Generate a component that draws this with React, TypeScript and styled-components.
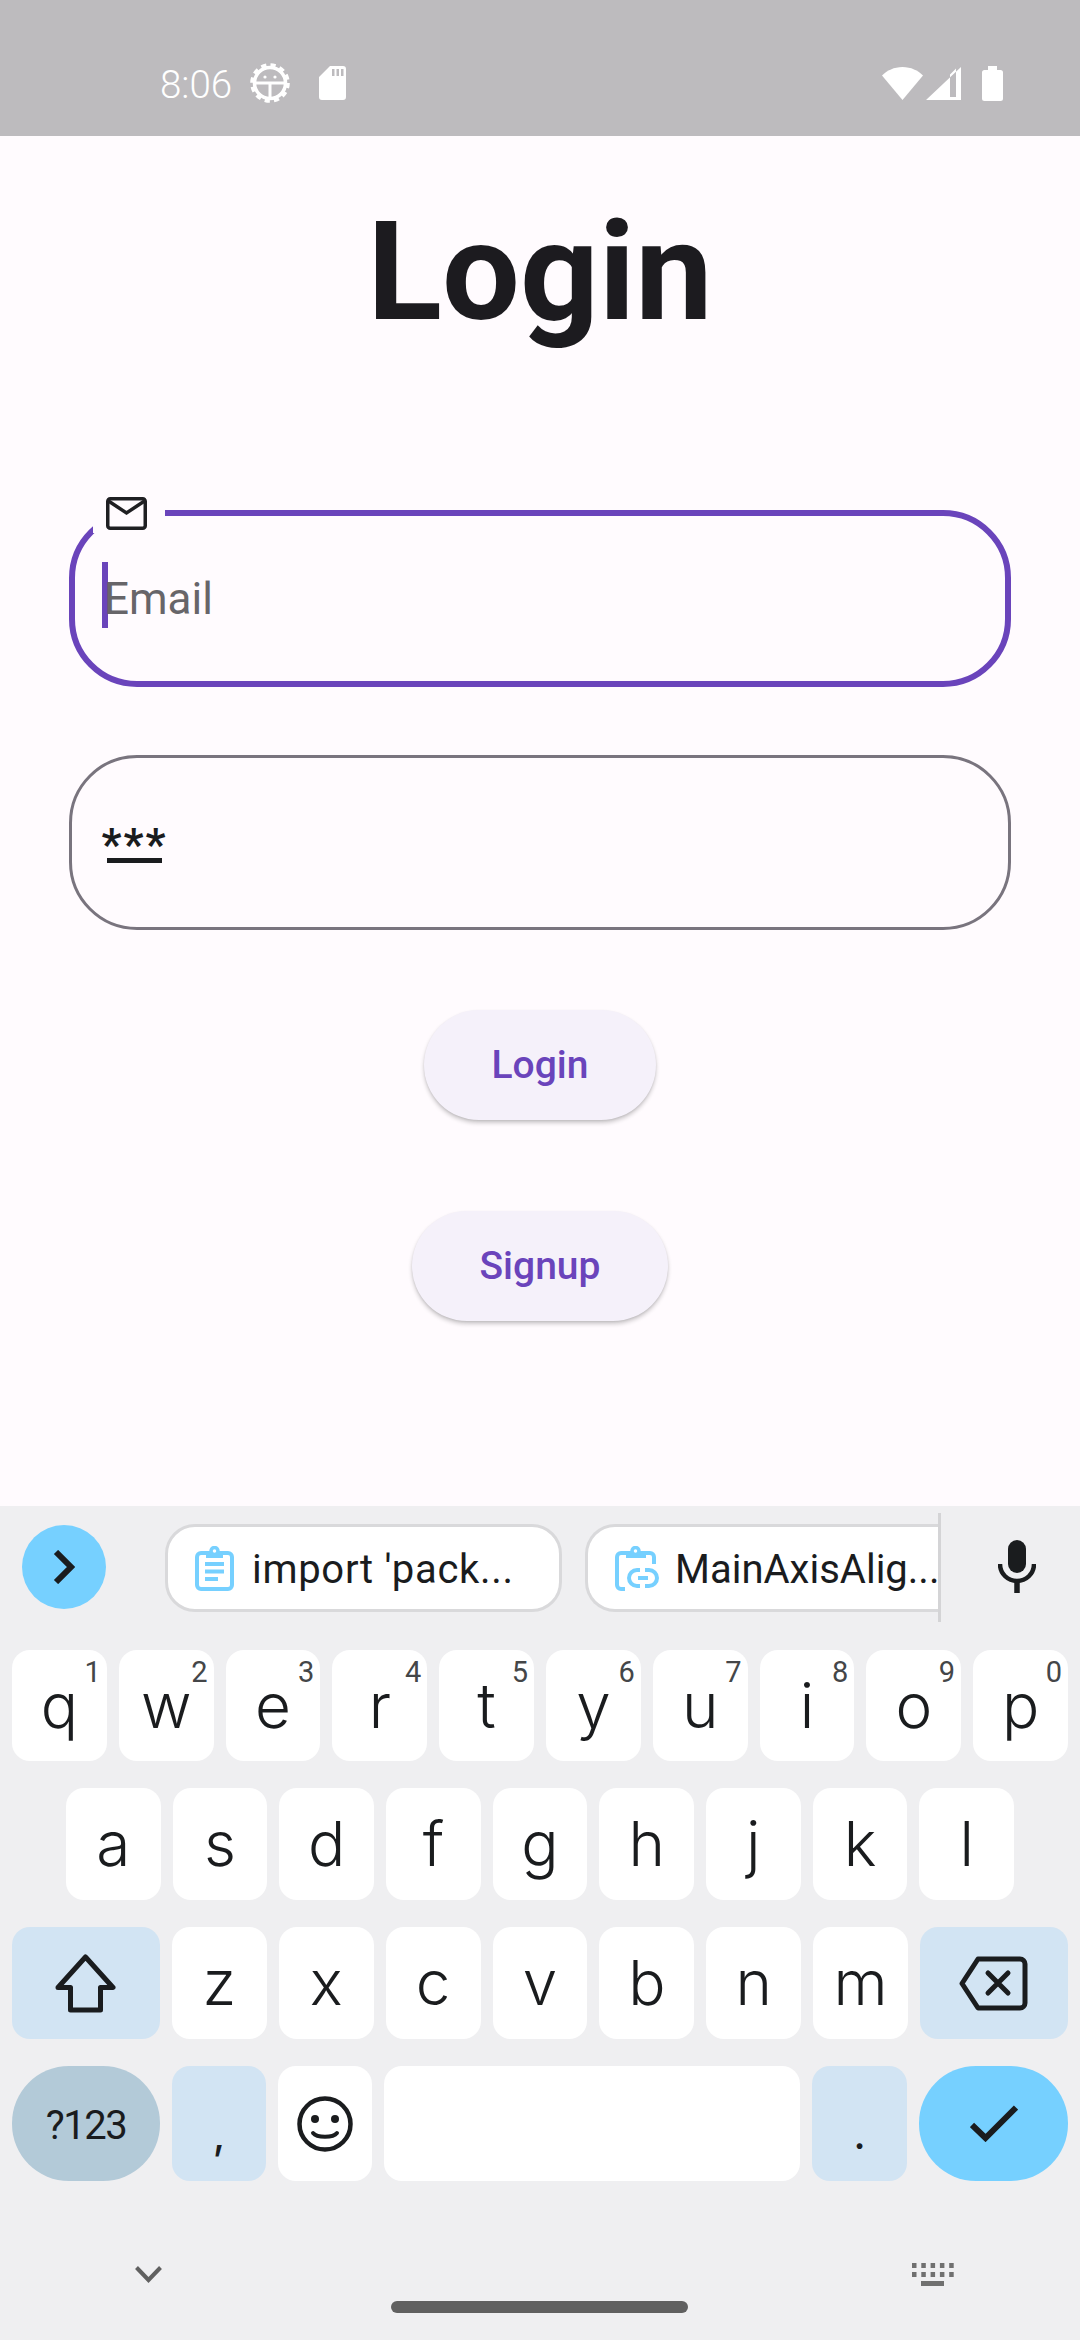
import React from "react";
import styled, { createGlobalStyle } from "styled-components";

const Global = createGlobalStyle`
  html, body { margin: 0; padding: 0; background: #fffbfe; }
  * { box-sizing: border-box; }
  #root { width: 1080px; height: 2340px; }
`;

const ROBOTO = `Roboto, "Liberation Sans", sans-serif`;
const INK = "#1a1c1e";
const PURPLE = "#6a44bb";
const SKY = "#76d0ff";
const MOD = "#d2e4f3";

const Screen = styled.div`
  width: 1080px;
  height: 2340px;
  display: flex;
  flex-direction: column;
  overflow: hidden;
  background: #fffbfe;
  font-family: ${ROBOTO};
`;

/* ---------- status bar ---------- */
const StatusBar = styled.header`
  height: 136px;
  flex: none;
  background: #bdbbbe;
  display: flex;
  align-items: center;
  justify-content: space-between;
  padding: 30px 77px 0 160px;
  color: #fff;
`;
const StatusGroup = styled.div<{ $gap: number; $lead?: number }>`
  display: flex;
  align-items: center;
  gap: ${(p) => p.$gap}px;
  margin-left: ${(p) => p.$lead ?? 0}px;
`;
const Clock = styled.span`
  font-size: 38.5px;
  font-weight: 300;
  line-height: 40px;
  width: 72px;
  margin-right: 18px;
  padding-top: 3px;
  white-space: nowrap;
`;
const StatusIcon = styled.svg`
  display: block;
  flex: none;
`;

/* ---------- form ---------- */
const Main = styled.main`
  flex: 1;
  display: flex;
  flex-direction: column;
  align-items: center;
`;
const Title = styled.h1`
  margin: 0;
  padding-top: 56px;
  height: 374px;
  font-size: 138px;
  line-height: 160px;
  font-weight: 700;
  color: #1c1b1f;
`;
const Field = styled.div<{ $focused?: boolean }>`
  position: relative;
  width: 942px;
  height: ${(p) => (p.$focused ? 177 : 175)}px;
  margin-bottom: ${(p) => (p.$focused ? 68 : 80)}px;
  border: ${(p) => (p.$focused ? `6px solid ${PURPLE}` : "3px solid #79747e")};
  border-radius: 68px;
  display: flex;
  align-items: center;
  padding-left: ${(p) => (p.$focused ? 27 : 35)}px;
`;
const Notch = styled.div`
  position: absolute;
  left: 18px;
  top: -19px;
  width: 72px;
  height: 36px;
  padding-left: 13px;
  background: #fffbfe;
`;
const Caret = styled.span`
  width: 6px;
  height: 66px;
  margin: 0 -4px 8px 0;
  background: ${PURPLE};
  flex: none;
`;
const Placeholder = styled.span`
  font-size: 44px;
  line-height: 50px;
  color: #676569;
`;
const Secret = styled.div`
  display: flex;
  flex-direction: column;
  align-items: center;
  width: 55px;
`;
const Stars = styled.span`
  font-size: 44px;
  letter-spacing: 2px;
  line-height: 40px;
  height: 34px;
  padding-top: 3px;
  font-weight: 700;
  color: ${INK};
  white-space: nowrap;
`;
const Underline = styled.span`
  width: 55px;
  height: 5px;
  margin-top: 2px;
  background: ${INK};
`;
const PillButton = styled.button<{ $width: number }>`
  width: ${(p) => p.$width}px;
  height: 110px;
  margin-bottom: 91px;
  border: 0;
  padding: 0;
  border-radius: 55px;
  background: #f5f1fa;
  color: ${PURPLE};
  font-family: ${ROBOTO};
  font-size: 39px;
  font-weight: 500;
  box-shadow: 0 3px 4px rgba(0, 0, 0, 0.2), 0 1px 2px rgba(0, 0, 0, 0.08);
`;

/* ---------- keyboard ---------- */
const Keyboard = styled.section`
  height: 834px;
  flex: none;
  background: #efeff1;
  display: flex;
  flex-direction: column;
`;
const Toolbar = styled.div`
  height: 144px;
  flex: none;
  padding: 7px 0 0 22px;
  display: flex;
  align-items: flex-start;
`;
const RoundToggle = styled.div`
  width: 84px;
  height: 84px;
  margin: 12px 59px 0 0;
  border-radius: 50%;
  background: ${SKY};
  display: flex;
  align-items: center;
  justify-content: center;
  flex: none;
`;
const Chip = styled.div<{ $width: number; $open?: boolean; $top?: number; $gap: number }>`
  width: ${(p) => p.$width}px;
  height: 88px;
  margin-top: ${(p) => p.$top ?? 0}px;
  flex: none;
  background: #fff;
  border: 3px solid #d9d9db;
  border-right-width: ${(p) => (p.$open ? 0 : 3)}px;
  border-radius: ${(p) => (p.$open ? "30px 0 0 30px" : "30px")};
  display: flex;
  align-items: center;
  padding-left: 27px;
  gap: ${(p) => p.$gap}px;
  color: ${INK};
  white-space: nowrap;
`;
const ChipLabel = styled.span<{ $track?: number }>`
  font-size: 40px;
  line-height: 48px;
  padding-top: 4px;
  letter-spacing: ${(p) => p.$track ?? 0}px;
`;
const ChipRail = styled.div`
  width: 356px;
  height: 109px;
  margin-left: 23px;
  padding-top: 11px;
  border-right: 3px solid #d4d4d6;
  flex: none;
`;
const MicSlot = styled.div`
  margin: 27px 0 0 57px;
`;
const KeyRows = styled.div`
  display: flex;
  flex-direction: column;
  gap: 27px;
`;
const KeyRow = styled.div<{ $inset?: number; $height: number }>`
  display: flex;
  gap: 12px;
  height: ${(p) => p.$height}px;
  padding: 0 ${(p) => p.$inset ?? 12}px;
`;
const Key = styled.div<{ $grow?: number; $tone?: "mod" | "sym" | "go"; $round?: boolean }>`
  position: relative;
  flex: ${(p) => p.$grow ?? 1} 1 0;
  min-width: 0;
  border-radius: ${(p) => (p.$round ? "57px" : "18px")};
  background: ${(p) =>
    p.$tone === "mod" ? MOD : p.$tone === "sym" ? "#b3cad8" : p.$tone === "go" ? SKY : "#fff"};
  display: flex;
  align-items: center;
  justify-content: center;
  color: ${INK};
  font-family: Inter, ${ROBOTO};
  font-size: 62px;
  font-weight: 300;
  line-height: 1;
`;
const Hint = styled.sup`
  position: absolute;
  top: 8px;
  right: 6px;
  font-family: ${ROBOTO};
  font-size: 29px;
  line-height: 1;
  font-weight: 400;
  color: #444648;
  vertical-align: baseline;
`;
const SymLabel = styled.span`
  font-family: ${ROBOTO};
  font-size: 40px;
  letter-spacing: -1.5px;
  font-weight: 400;
  padding-top: 4px;
`;
const Punct = styled.span`
  font-size: 40px;
  font-weight: 500;
  line-height: 1;
  padding-top: 22px;
`;
const NavBar = styled.div`
  position: relative;
  flex: 1;
  padding: 0 126px 0 135px;
  display: flex;
  justify-content: space-between;
  align-items: flex-start;
`;
const NavIcon = styled.svg<{ $top: number }>`
  display: block;
  margin-top: ${(p) => p.$top}px;
`;
const HomeBar = styled.div`
  position: absolute;
  left: 391px;
  top: 120px;
  width: 297px;
  height: 12px;
  border-radius: 6px;
  background: #606060;
`;

/* ---------- drawings ---------- */
const GearIcon = () => (
  <StatusIcon width="40" height="40" viewBox="0 0 40 40" fill="none" stroke="#fff">
    <circle cx="20" cy="20" r="15.5" strokeWidth="3.5" />
    <circle cx="20" cy="20" r="18" strokeWidth="3.6" strokeDasharray="5.2 4.22" />
    <path d="M5 20H35M20 20V35" strokeWidth="3" />
    <circle cx="15" cy="14" r="1.6" fill="#fff" stroke="none" />
    <circle cx="25" cy="14" r="1.6" fill="#fff" stroke="none" />
  </StatusIcon>
);
const SdIcon = () => (
  <StatusIcon width="27" height="34" viewBox="0 0 27 34">
    <path
      fill="#fff"
      fillRule="evenodd"
      d="M11 0H24a3 3 0 0 1 3 3V31a3 3 0 0 1-3 3H3a3 3 0 0 1-3-3V11ZM13 3V10H15.500V3ZM17.500 3V10H20V3ZM22 3V10H24.500V3Z"
    />
  </StatusIcon>
);
const WifiIcon = () => (
  <StatusIcon width="41" height="33" viewBox="0 0 41 33">
    <path fill="#fff" d="M20.500 33 0 8.500C5 3.500 12 0 20.500 0S36 3.500 41 8.500Z" />
  </StatusIcon>
);
const SignalIcon = () => (
  <StatusIcon width="35" height="33" viewBox="0 0 35 33">
    <path fill="#fff" fillRule="evenodd" d="M35 0V33H0ZM24 7.500 24 30H30V1.500Z" />
  </StatusIcon>
);
const BatteryIcon = () => (
  <StatusIcon width="21" height="35" viewBox="0 0 21 35">
    <path fill="#fff" d="M6 0H15V4H18.500A2.500 2.500 0 0 1 21 6.500V32.500A2.500 2.500 0 0 1 18.500 35H2.500A2.500 2.500 0 0 1 0 32.500V6.500A2.500 2.500 0 0 1 2.500 4H6Z" />
  </StatusIcon>
);
const MailIcon = () => (
  <StatusIcon width="41" height="33" viewBox="0 0 41 33" fill="none" stroke="#1f1f22" strokeWidth="3.500">
    <rect x="1.750" y="1.750" width="37.500" height="29.500" rx="2.500" />
    <path d="M2.500 4 20.500 16 38.500 4" />
  </StatusIcon>
);
const ClipIcon = () => (
  <StatusIcon width="39" height="45" viewBox="0 0 39 45" fill="none" stroke={SKY}>
    <rect x="2" y="7" width="35" height="36" rx="4" strokeWidth="4" />
    <path d="M11 9.500H28" strokeWidth="5" />
    <circle cx="19.500" cy="5" r="3.500" strokeWidth="3.500" fill="#fff" />
    <path d="M10 18H29M10 25.500H29M10 33H23" strokeWidth="4" />
  </StatusIcon>
);
const ClipLinkIcon = () => (
  <StatusIcon width="44" height="45" viewBox="0 0 44 45" fill="none" stroke={SKY}>
    <path d="M10 43H6A4 4 0 0 1 2 39V11A4 4 0 0 1 6 7H35A4 4 0 0 1 39 11V18" strokeWidth="4" />
    <path d="M11 9.500H31" strokeWidth="5" />
    <circle cx="20.500" cy="5" r="3.500" strokeWidth="3.500" fill="#fff" />
    <path d="M25 24H22A8 8 0 0 0 22 40H25M30 24H34A8 8 0 0 1 34 40H30M23 32H33" strokeWidth="4" />
  </StatusIcon>
);
const ChevronRight = () => (
  <StatusIcon width="22" height="34" viewBox="0 0 22 34" fill="none" stroke={INK} strokeWidth="6">
    <path d="M3 2 18 17 3 32" />
  </StatusIcon>
);
const MicIcon = () => (
  <StatusIcon width="38" height="53" viewBox="0 0 38 53">
    <rect x="10" y="0" width="18" height="33" rx="9" fill={INK} />
    <path d="M2 24C2 34 10 41 19 41S36 34 36 24" fill="none" stroke={INK} strokeWidth="4.500" />
    <path d="M19 40V53" fill="none" stroke={INK} strokeWidth="5.500" />
  </StatusIcon>
);
const ShiftIcon = () => (
  <StatusIcon width="61" height="59" viewBox="0 0 61 59" fill="none" stroke={INK} strokeWidth="5" strokeLinejoin="round">
    <path d="M30.500 3 58 33.500H45.500V56H15.500V33.500H3Z" />
  </StatusIcon>
);
const BackspaceIcon = () => (
  <StatusIcon width="69" height="55" viewBox="0 0 69 55" fill="none" stroke={INK} strokeWidth="5" strokeLinecap="round" strokeLinejoin="round">
    <path d="M19 3H61A5 5 0 0 1 66 8V47A5 5 0 0 1 61 52H19L3 27.500Z" />
    <path d="M29 17 49 37M49 17 29 37" />
  </StatusIcon>
);
const SmileIcon = () => (
  <StatusIcon width="56" height="56" viewBox="0 0 56 56" fill="none" stroke={INK}>
    <circle cx="28" cy="28" r="25.500" strokeWidth="4.500" />
    <circle cx="18" cy="23" r="4" fill={INK} stroke="none" />
    <circle cx="38" cy="23" r="4" fill={INK} stroke="none" />
    <path d="M16 37C20 42 36 42 40 37" strokeWidth="4" strokeLinecap="round" />
  </StatusIcon>
);
const CheckIcon = () => (
  <StatusIcon width="48" height="37" viewBox="0 0 48 37" fill="none" stroke={INK} strokeWidth="6">
    <path d="M2 20 15.500 33 46 2.500" />
  </StatusIcon>
);

const TOP_ROW: [string, string][] = [
  ["q", "1"], ["w", "2"], ["e", "3"], ["r", "4"], ["t", "5"],
  ["y", "6"], ["u", "7"], ["i", "8"], ["o", "9"], ["p", "0"],
];
const MID_ROW = ["a", "s", "d", "f", "g", "h", "j", "k", "l"];
const LOW_ROW = ["z", "x", "c", "v", "b", "n", "m"];

export default function App() {
  return (
    <Screen>
      <Global />
      <StatusBar>
        <StatusGroup $gap={0}>
          <Clock>8:06</Clock>
          <GearIcon />
          <StatusGroup $gap={0} $lead={29}>
            <SdIcon />
          </StatusGroup>
        </StatusGroup>
        <StatusGroup $gap={3}>
          <WifiIcon />
          <SignalIcon />
          <StatusGroup $gap={0} $lead={18}>
            <BatteryIcon />
          </StatusGroup>
        </StatusGroup>
      </StatusBar>

      <Main>
        <Title>Login</Title>
        <Field $focused>
          <Notch>
            <MailIcon />
          </Notch>
          <Caret />
          <Placeholder>Email</Placeholder>
        </Field>
        <Field>
          <Secret>
            <Stars>***</Stars>
            <Underline />
          </Secret>
        </Field>
        <PillButton $width={232}>Login</PillButton>
        <PillButton $width={256}>Signup</PillButton>
      </Main>

      <Keyboard>
        <Toolbar>
          <RoundToggle>
            <ChevronRight />
          </RoundToggle>
          <Chip $width={397} $top={11} $gap={18}>
            <ClipIcon />
            <ChipLabel $track={0.7}>import 'pack...</ChipLabel>
          </Chip>
          <ChipRail>
            <Chip $width={353} $open $gap={16}>
              <ClipLinkIcon />
              <ChipLabel>MainAxisAlig...</ChipLabel>
            </Chip>
          </ChipRail>
          <MicSlot>
            <MicIcon />
          </MicSlot>
        </Toolbar>
        <KeyRows>
          <KeyRow $height={111}>
            {TOP_ROW.map(([letter, hint]) => (
              <Key key={letter}>
                {letter}
                <Hint>{hint}</Hint>
              </Key>
            ))}
          </KeyRow>
          <KeyRow $height={112} $inset={66}>
            {MID_ROW.map((letter) => (
              <Key key={letter}>{letter}</Key>
            ))}
          </KeyRow>
          <KeyRow $height={112}>
            <Key $grow={1.56} $tone="mod">
              <ShiftIcon />
            </Key>
            {LOW_ROW.map((letter) => (
              <Key key={letter}>{letter}</Key>
            ))}
            <Key $grow={1.56} $tone="mod">
              <BackspaceIcon />
            </Key>
          </KeyRow>
          <KeyRow $height={115}>
            <Key $grow={148} $tone="sym" $round>
              <SymLabel>?123</SymLabel>
            </Key>
            <Key $grow={94} $tone="mod">
              <Punct>,</Punct>
            </Key>
            <Key $grow={94}>
              <SmileIcon />
            </Key>
            <Key $grow={416} />
            <Key $grow={95} $tone="mod">
              <Punct>.</Punct>
            </Key>
            <Key $grow={149} $tone="go" $round>
              <CheckIcon />
            </Key>
          </KeyRow>
        </KeyRows>
        <NavBar>
          <NavIcon $top={85} width="27" height="17" viewBox="0 0 27 17" fill="none" stroke="#606060" strokeWidth="4">
            <path d="M1.500 1.500 13.500 14 25.500 1.500" />
          </NavIcon>
          <HomeBar />
          <NavIcon $top={82} width="42" height="23" viewBox="0 0 42 23" fill="#707070">
            <path d="M0 0H4.500V5H0ZM9.300 0H13.800V5H9.300ZM18.600 0H23.100V5H18.600ZM27.900 0H32.400V5H27.900ZM37.200 0H41.700V5H37.200ZM0 9H4.500V14H0ZM9.300 9H13.800V14H9.300ZM18.600 9H23.100V14H18.600ZM27.900 9H32.400V14H27.900ZM37.200 9H41.700V14H37.200ZM9 18H32V23H9Z" />
          </NavIcon>
        </NavBar>
      </Keyboard>
    </Screen>
  );
}
